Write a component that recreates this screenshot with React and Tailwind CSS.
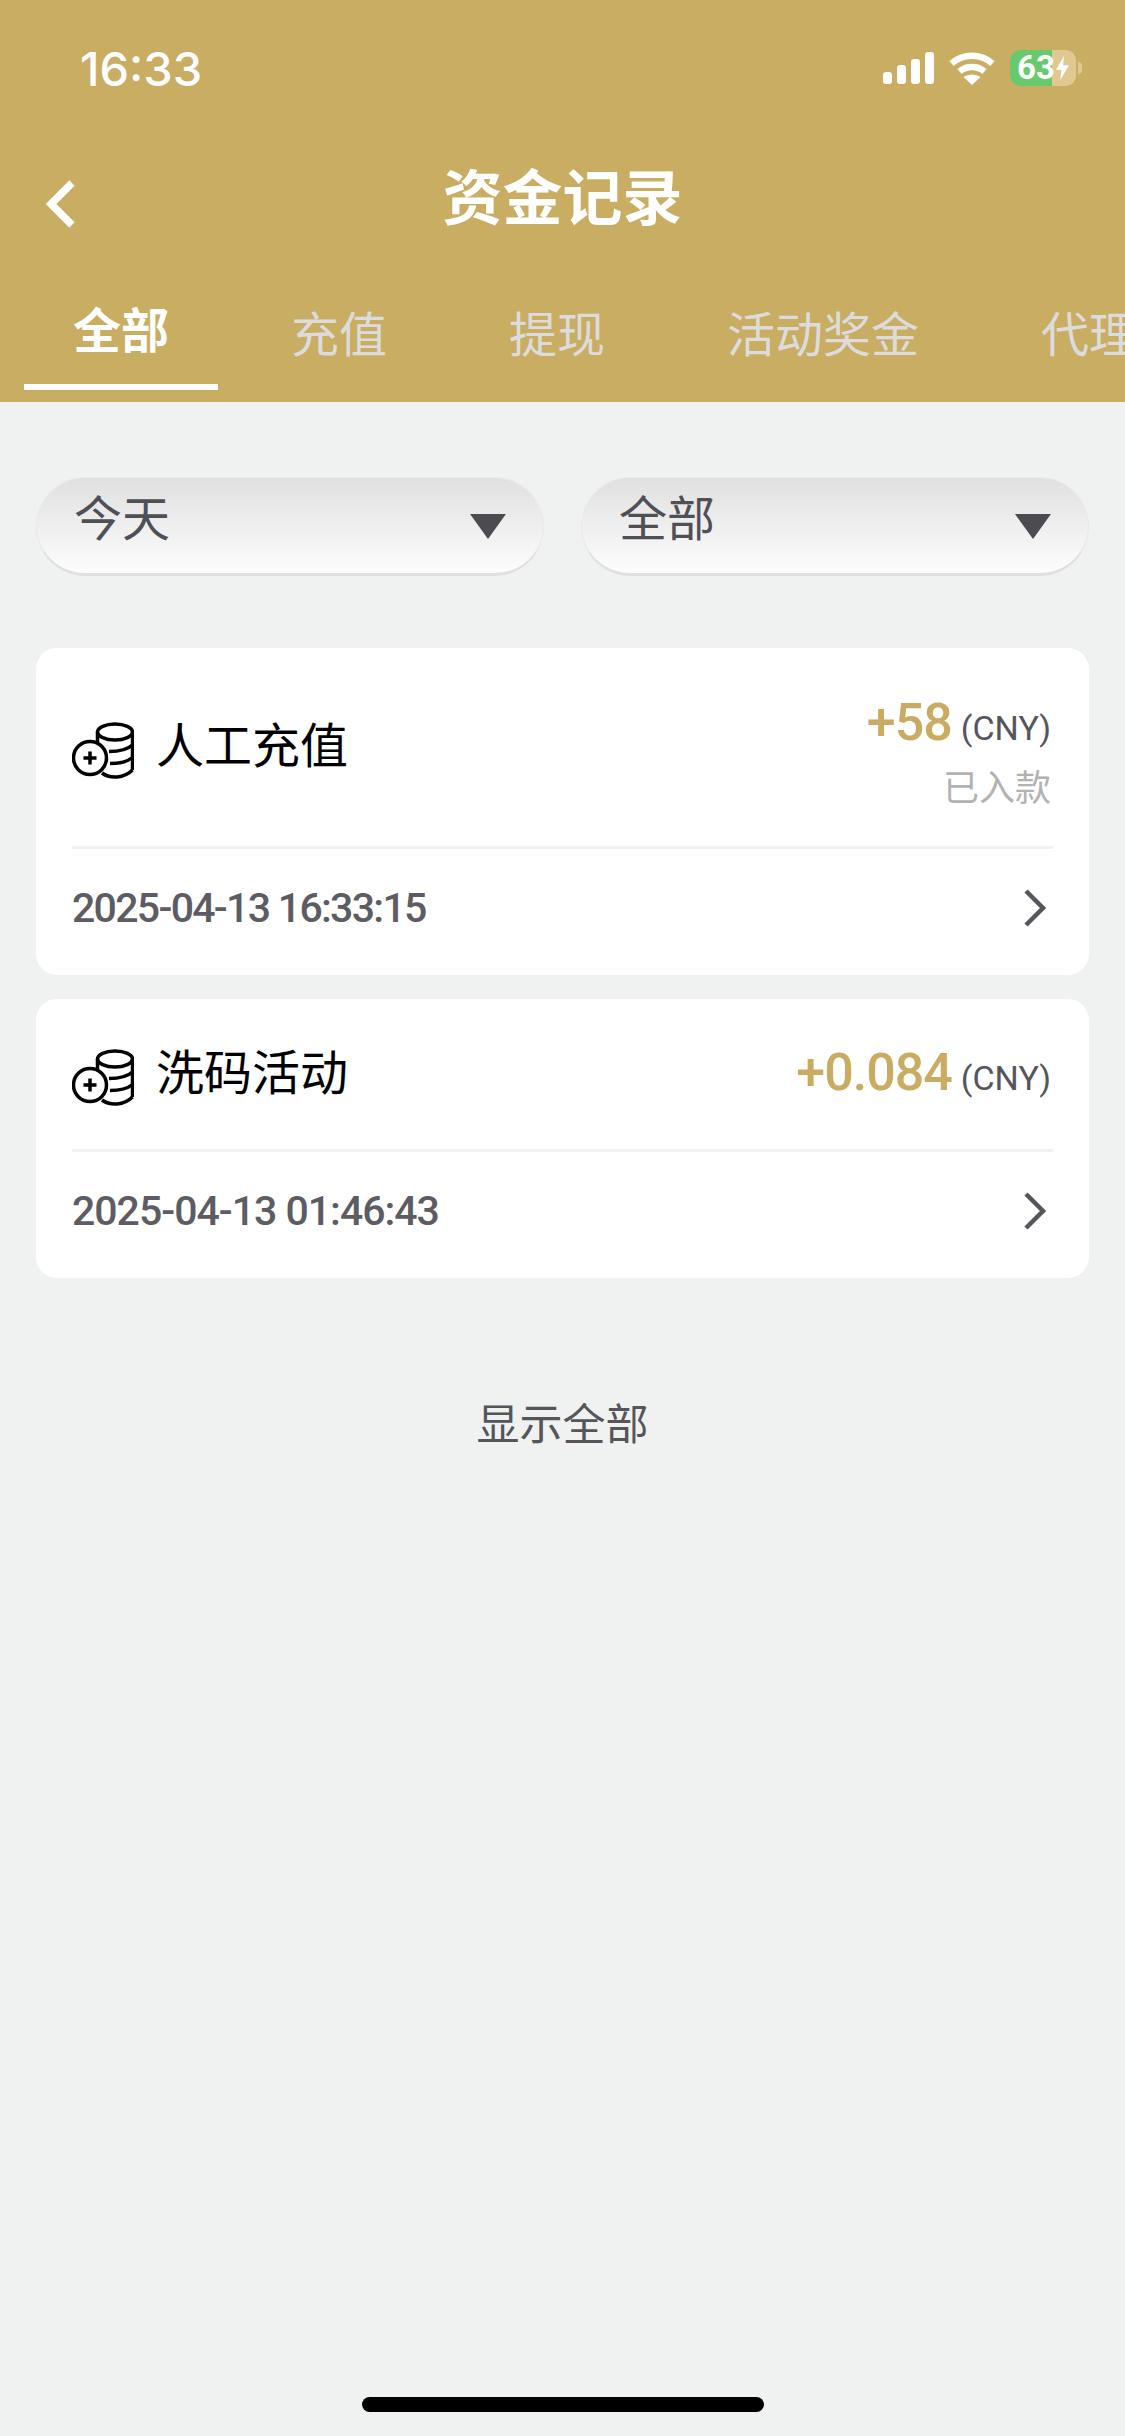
import React from 'react';

const tabs = ['全部', '充值', '提现', '活动奖金', '代理'];

const StatusIcons = () => (
  <div className="flex items-center gap-[15px]">
    <svg width="51" height="32" viewBox="0 0 51 32" fill="white">
      <rect x="0" y="20" width="9" height="12" rx="3" />
      <rect x="14" y="13" width="9" height="19" rx="3" />
      <rect x="28" y="7" width="9" height="25" rx="3" />
      <rect x="42" y="0" width="9" height="32" rx="3" />
    </svg>
    <svg width="46" height="33" viewBox="0 0 46 33" fill="none" stroke="white" strokeWidth="6.5">
      <path d="M2.5 11.5C14 1 32 1 43.5 11.5" />
      <path d="M10.5 19.5C17.5 13.5 28.500 13.500 35.500 19.500" />
      <path d="M23 33L14.500 25C19 21.500 27 21.500 31.500 25Z" fill="white" stroke="none" />
    </svg>
    <div className="flex items-center gap-[2px]">
      <div className="relative w-[66px] h-[36px] rounded-[10px] overflow-hidden bg-[#dfc892] flex items-center">
        <div className="w-[42px] h-full bg-[#68c96f]"></div>
        <span className="absolute left-[7px] top-0 leading-[36px] text-[33px] font-bold text-white font-['Roboto','Liberation_Sans',sans-serif]">63</span>
        <svg className="absolute left-[46px] top-[6px]" width="13" height="24" viewBox="0 0 18 27" preserveAspectRatio="none" fill="white">
          <path d="M11 0L0 15.500H7.500L6 27L18 10.500H10Z" />
        </svg>
      </div>
      <div className="w-[4px] h-[12px] rounded-r-full bg-[#dfc892]"></div>
    </div>
  </div>
);

const CoinIcon = () => (
  <svg width="62" height="57" viewBox="0 0 62 57" fill="none" stroke="black" strokeWidth="3.500" className="mt-[6px] shrink-0">
    <ellipse cx="43" cy="10" rx="17.500" ry="8" />
    <path d="M25.500 10V26" />
    <path d="M60.500 10V48" />
    <path d="M37 29.500C45 29.500 55 28 60.500 23" />
    <path d="M38 41.500C46 41.500 55 40 60.500 35.500" />
    <path d="M30 51C38 57 52 56.500 60.500 48" />
    <circle cx="18" cy="36" r="16.500" fill="white" />
    <path d="M18 29.500V42.500M11.500 36H24.500" />
  </svg>
);

const Dropdown = ({ label }) => (
  <div className="flex-1 h-[99px] flex items-center justify-between pl-[37px] pr-[36px] pb-[12px] rounded-[50px] border border-[#e8e9e8] border-b-[3px] border-b-[#e0e0e0] bg-gradient-to-b from-[#e0e0e0] to-[#fdfdfd]">
    <span className="text-[48px] leading-[60px] text-[#4f4f55]">{label}</span>
    <svg width="38" height="26" viewBox="0 0 38 26" className="mt-[12px]" fill="#4c4b50">
      <path d="M1 1H37L19 26Z" />
    </svg>
  </div>
);

const RecordCard = ({ title, amount, status, time, timeClass }) => (
  <div className="bg-white rounded-[21px] px-[36px]">
    <div className={`flex justify-between items-center ${status ? 'h-[198px]' : 'h-[150px]'}`}>
      <div className="flex items-center gap-[22px]">
        <CoinIcon />
        <span className="text-[48px] leading-[60px] text-black">{title}</span>
      </div>
      <div className={`flex flex-col items-end pr-[2px] ${status ? 'pt-[10px]' : 'pt-[2px]'}`}>
        <div className="flex items-baseline gap-[9px]">
          <span className="font-['Roboto'] text-[52px] leading-[60px] font-medium text-[#c9ac62] tracking-[-1px]">{amount}</span>
          <span className="font-['Roboto'] text-[34px] leading-[60px] text-[#55555b]">(CNY)</span>
        </div>
        {status && <span className="text-[36px] leading-[46px] mt-[8px] text-[#b2b2b2]">{status}</span>}
      </div>
    </div>
    <div className="h-[3px] bg-[#f1f1f1]"></div>
    <div className="h-[126px] pb-[9px] flex items-center justify-between">
      <span className={`font-['Roboto'] text-[41px] leading-[50px] font-medium text-[#5c5c62] ${timeClass}`}>{time}</span>
      <svg width="24" height="38" viewBox="0 0 24 38" fill="none" stroke="#55555b" strokeWidth="4.500" className="mr-[6px]">
        <path d="M3 2L20 19L3 36" />
      </svg>
    </div>
  </div>
);

export default function App() {
  return (
    <div className="w-[1125px] h-[2436px] flex flex-col bg-[#f0f2f1] overflow-hidden font-['Roboto','Noto_Sans_CJK_SC',sans-serif]">
      <header className="h-[402px] bg-[#c9ad62] flex flex-col">
        <div className="h-[136px] flex items-center justify-between pl-[80px] pr-[43px]">
          <span className="font-['Inter'] text-[47px] font-medium text-white pt-[2px]">16:33</span>
          <StatusIcons />
        </div>
        <div className="relative h-[122px] flex items-center justify-center">
          <svg className="absolute left-[44px] top-[44px]" width="32" height="48" viewBox="0 0 32 48" fill="none" stroke="white" strokeWidth="7.500">
            <path d="M28 3L7 24L28 45" />
          </svg>
          <h1 className="text-[60px] leading-[70px] font-bold text-white pt-[5px]">资金记录</h1>
        </div>
        <div className="h-[144px] flex ml-[24px] gap-[24px] overflow-hidden">
          {tabs.map((tab, i) => (
            <div key={tab} className={`shrink-0 px-[49px] pb-[12px] h-[132px] flex flex-col justify-end ${i === 0 ? 'border-b-[6px] border-white' : ''}`}>
              <span className={`text-[48px] leading-[60px] whitespace-nowrap ${i === 0 ? 'font-semibold text-white mb-[10px]' : 'text-[#dcdcdc] mb-[12px]'}`}>{tab}</span>
            </div>
          ))}
        </div>
      </header>

      <main className="flex-1 px-[36px] pt-[75px]">
        <div className="flex gap-[37px]">
          <Dropdown label="今天" />
          <Dropdown label="全部" />
        </div>
        <div className="mt-[72px] flex flex-col gap-[24px]">
          <RecordCard title="人工充值" amount="+58" status="已入款" time="2025-04-13 16:33:15" timeClass="tracking-[-1.700px]" />
          <RecordCard title="洗码活动" amount="+0.084" time="2025-04-13 01:46:43" timeClass="tracking-[-1px]" />
        </div>
        <p className="mt-[120px] text-center text-[43px] leading-[54px] text-[#55555a]">显示全部</p>
      </main>

      <div className="h-[39px] flex justify-center">
        <div className="w-[402px] h-[15px] rounded-full bg-black"></div>
      </div>
    </div>
  );
}
